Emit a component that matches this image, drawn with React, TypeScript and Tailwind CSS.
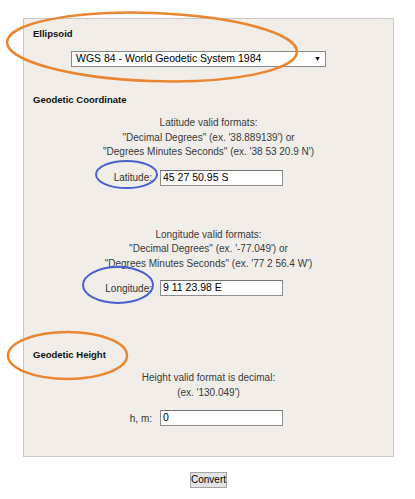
import React from "react";

const font = { fontFamily: '"Liberation Sans", Arial, sans-serif' };

const Field = ({ label, value, className }: { label: string; value: string; className?: string }) => (
  <div className={`flex items-center ${className ?? ""}`}>
    <div className="w-[128px] text-right text-[10px] text-[#333]">{label}</div>
    <div className="ml-[8px] flex h-[16px] w-[123px] items-center border border-[#8e8e8e] border-t-[#6f6f6f] bg-white pl-[2px] text-[10.5px] text-black">
      {value}
    </div>
  </div>
);

const Hint = ({ lines, className }: { lines: string[]; className?: string }) => (
  <div className={`text-center text-[10px] leading-[14.5px] text-[#3a3a3a] ${className ?? ""}`}>
    {lines.map((l, i) => (
      <div key={i}>{l}</div>
    ))}
  </div>
);

const App: React.FC = () => {
  return (
    <div className="relative h-[499px] w-[415px] overflow-hidden bg-white" style={font}>
      <div className="ml-[23px] mt-[18px] w-[371px] border border-[#c8c8c8] bg-[#f1eee9] pb-[30px]">
        <div className="pl-[9px] pt-[8px] text-[9.5px] font-bold leading-[14px] text-[#111]">Ellipsoid</div>
        <div className="ml-[47px] mt-[10px] flex h-[16px] w-[255px] items-center justify-between border border-[#8a8a8a] bg-white pl-[4px] pr-[4px] text-[10.5px] text-black">
          <span>WGS 84 - World Geodetic System 1984</span>
          <span className="text-[7px]">▼</span>
        </div>

        <div className="mt-[26px] pl-[9px] text-[9.5px] font-bold leading-[14px] text-[#111]">Geodetic Coordinate</div>
        <Hint
          className="mt-[9px]"
          lines={[
            "Latitude valid formats:",
            "\"Decimal Degrees\" (ex. '38.889139') or",
            "\"Degrees Minutes Seconds\" (ex. '38 53 20.9 N')",
          ]}
        />
        <Field className="mt-[10px]" label="Latitude:" value="45 27 50.95 S" />

        <Hint
          className="mt-[42px]"
          lines={[
            "Longitude valid formats:",
            "\"Decimal Degrees\" (ex. '-77.049') or",
            "\"Degrees Minutes Seconds\" (ex. '77 2 56.4 W')",
          ]}
        />
        <Field className="mt-[9px]" label="Longitude:" value="9 11 23.98 E" />

        <div className="mt-[52px] pl-[9px] text-[9.5px] font-bold leading-[14px] text-[#111]">Geodetic Height</div>
        <Hint className="mt-[9px]" lines={["Height valid format is decimal:", "(ex. '130.049')"]} />
        <Field className="mt-[10px]" label="h, m:" value="0" />
      </div>

      <div className="mt-[15px] flex justify-center pl-[2px]">
        <button className="h-[16px] w-[37px] border border-[#a5a5a5] bg-[#e4e4e4] p-0 text-[10px] leading-none text-black">
          Convert
        </button>
      </div>

      <svg className="pointer-events-none absolute left-0 top-0" width="415" height="499" viewBox="0 0 415 499" fill="none">
        <ellipse cx="152" cy="47" rx="145" ry="34" stroke="#ea8530" strokeWidth="2.5" transform="rotate(2 152 47)" />
        <ellipse cx="126.5" cy="174.5" rx="30.5" ry="13.5" stroke="#4a5fd2" strokeWidth="2" />
        <ellipse cx="118" cy="285" rx="35" ry="18" stroke="#4a5fd2" strokeWidth="2" />
        <ellipse cx="67.5" cy="355.5" rx="59.5" ry="23.5" stroke="#ea8530" strokeWidth="2.5" />
      </svg>
    </div>
  );
};

export default App;
